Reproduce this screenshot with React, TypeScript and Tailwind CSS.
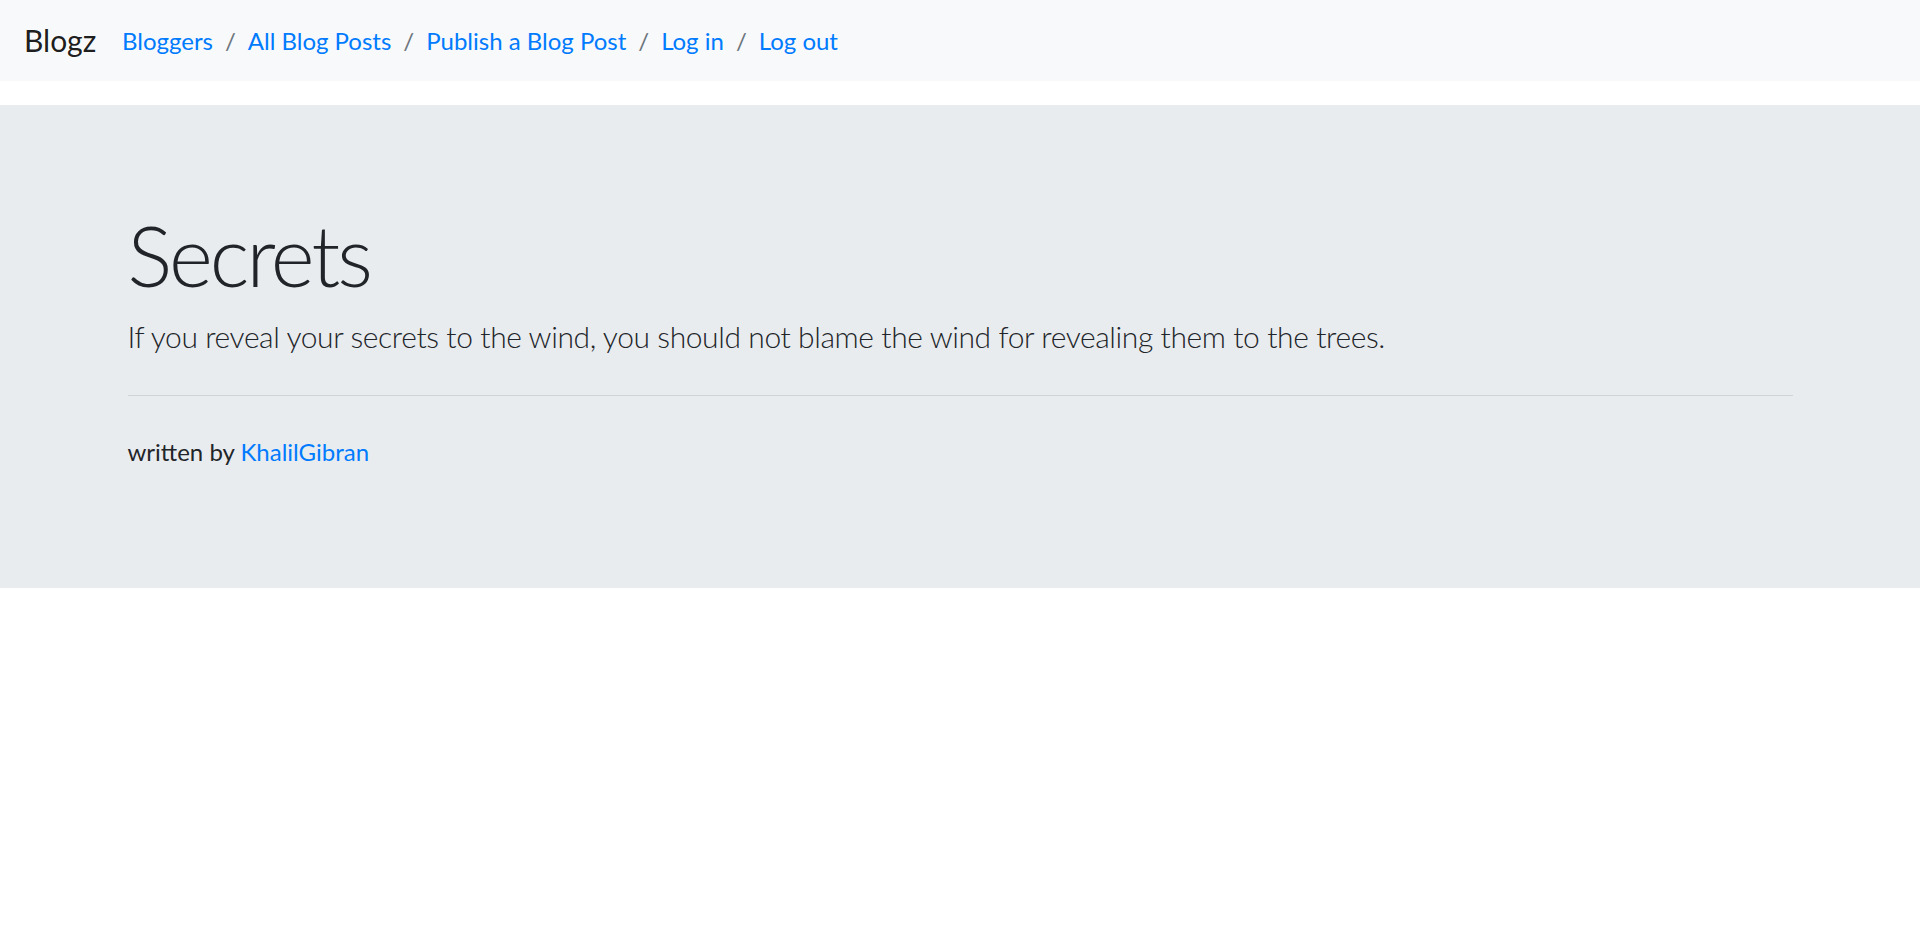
import React from 'react'

const links = ['Bloggers', 'All Blog Posts', 'Publish a Blog Post', 'Log in', 'Log out']

function Navbar() {
  return (
    <nav className="h-[81px] bg-[#f8f9fa] flex items-center px-[24px]">
      <a className="text-[30px] leading-[45px] text-black/90 mr-[24px] w-[74px]">Blogz</a>
      <ol className="flex items-center text-[24px] leading-[36px]">
        {links.map((l, i) => (
          <li key={l} className="flex items-center">
            {i > 0 && <span className="px-[12px] text-[#6c757d]">/</span>}
            <a className="text-[#007bff]">{l}</a>
          </li>
        ))}
      </ol>
    </nav>
  )
}

export default function App() {
  return (
    <div className="min-h-[934px] bg-white text-[#212529] font-['Lato','Liberation_Sans',sans-serif]">
      <Navbar />

      {/* jumbotron */}
      <div className="mt-[24px] bg-[#e9ecef] py-[96px]">
        <div className="max-w-[1710px] mx-auto px-[22.5px]">
          <h1 className="text-[84px] leading-[100.8px] font-light tracking-[-3px] pt-[4px] mb-[8px]">Secrets</h1>
          <p className="text-[30px] leading-[45px] font-light tracking-[-0.4px]">
            If you reveal your secrets to the wind, you should not blame the wind for revealing them to the trees.
          </p>
          <hr className="mt-[36px] mb-[38px] border-0 border-t border-black/10" />
          <p className="text-[24px] leading-[36px] mb-[22px]">
            written by <a className="text-[#007bff]">KhalilGibran</a>
          </p>
        </div>
      </div>
    </div>
  )
}
